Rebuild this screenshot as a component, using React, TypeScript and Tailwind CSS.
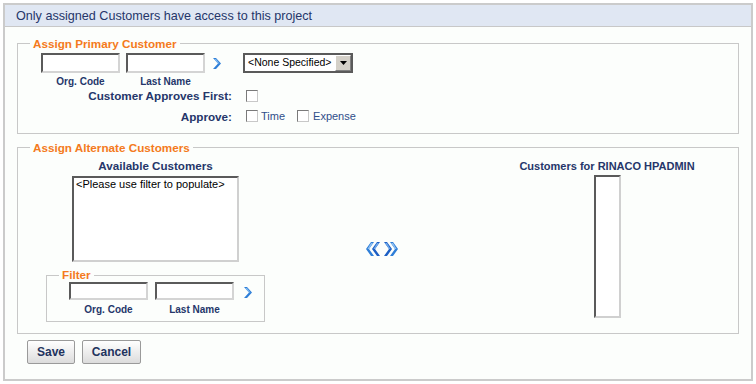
import React from "react";

const font = { fontFamily: '"Liberation Sans", Arial, sans-serif' };

function Chevron({ className = "" }: { className?: string }) {
  return (
    <svg width="8" height="11" viewBox="0 0 8 11" className={className}>
      <polygon points="0,0 3,0 8,5.5 3,11 0,11 5,5.5" fill="#2f7fd8" />
      <polygon points="1,1 3,1 6.5,5.5 5,5.5" fill="#7fb8f0" />
    </svg>
  );
}

function DoubleChevron({ left = false }: { left?: boolean }) {
  return (
    <svg width="15" height="14" viewBox="0 0 15 14" style={left ? { transform: "scaleX(-1)" } : undefined}>
      <polygon points="0,0 3,0 8,7 3,14 0,14 5,7" fill="#1d5fc4" />
      <polygon points="6,0 9,0 14,7 9,14 6,14 11,7" fill="#2f7fd8" />
      <polygon points="1,1 3,1 6.5,7 5,7" fill="#6ea8ea" />
      <polygon points="7,1 9,1 12.5,7 11,7" fill="#8fc0f2" />
    </svg>
  );
}

function TextBox({ w = "w-[79px]", h = "h-[20px]" }: { w?: string; h?: string }) {
  return (
    <div className={`${w} ${h} bg-white border-2 border-t-[#5a5a5a] border-l-[#5a5a5a] border-b-[#d4d4d4] border-r-[#d4d4d4]`} />
  );
}

function Check() {
  return <div className="w-[12px] h-[12px] bg-white border border-t-[#7a7a7a] border-l-[#7a7a7a] border-b-[#c8c8c8] border-r-[#c8c8c8]" />;
}

function Legend({ children }: { children: React.ReactNode }) {
  return <legend className="ml-[12px] px-[3px] text-[11.7px] font-bold text-[#f47a20] leading-[15px]">{children}</legend>;
}

function Btn({ children, w }: { children: React.ReactNode; w: string }) {
  return (
    <button className={`${w} h-[24px] rounded-[2px] border border-[#9a9a9a] bg-gradient-to-b from-white to-[#dcdcdc] text-[12px] font-bold text-[#22335e]`}>
      {children}
    </button>
  );
}

export default function App() {
  return (
    <div className="bg-white w-[756px] h-[384px] pt-[3px] pl-[3px]" style={font}>
      <div className="w-[750px] h-[378px] border-2 border-[#cbcbcb] bg-[#fcfefc]">
        {/* header */}
        <div className="h-[22px] pt-[1px] bg-[#e0e7f3] border-b border-[#c8c8c8] pl-[11px] flex items-center text-[12.6px] text-[#25366a]">
          Only assigned Customers have access to this project
        </div>

        {/* primary customer */}
        <fieldset className="mx-[12px] mt-[9px] h-[98px] border border-[#c8c8c8]">
          <Legend>Assign Primary Customer</Legend>
          <div className="flex items-start pl-[23px] pt-[2px]">
            <div className="flex flex-col items-center">
              <TextBox />
              <span className="text-[10px] font-bold text-[#25366a] mt-[1px]">Org. Code</span>
            </div>
            <div className="flex flex-col items-center ml-[6px]">
              <TextBox />
              <span className="text-[10px] font-bold text-[#25366a] mt-[1px]">Last Name</span>
            </div>
            <Chevron className="ml-[8px] mt-[5px]" />
            <div className="ml-[22px] w-[110px] h-[20px] border-2 border-[#5a5a5a] bg-white flex items-center">
              <span className="pl-[3px] text-[10.5px] text-black flex-1 whitespace-nowrap">&lt;None Specified&gt;</span>
              <div className="w-[16px] h-full bg-[#d4d0c8] border border-t-white border-l-white border-b-[#808080] border-r-[#808080] flex items-center justify-center">
                <svg width="7" height="4" viewBox="0 0 7 4"><polygon points="0,0 7,0 3.5,4" fill="#000" /></svg>
              </div>
            </div>
          </div>
          <div className="flex items-center mt-[-2px]">
            <span className="w-[214px] text-right text-[11.7px] font-bold text-[#25366a]">Customer Approves First:</span>
            <div className="ml-[14px]"><Check /></div>
          </div>
          <div className="flex items-center mt-[3px]">
            <span className="w-[214px] text-right text-[11.7px] font-bold text-[#25366a]">Approve:</span>
            <div className="ml-[14px] flex items-center">
              <Check />
              <span className="ml-[3px] text-[11px] text-[#2f4e8a]">Time</span>
              <div className="ml-[12px]"><Check /></div>
              <span className="ml-[4px] text-[11px] text-[#2f4e8a]">Expense</span>
            </div>
          </div>
        </fieldset>

        {/* alternate customers */}
        <fieldset className="mx-[12px] mt-[6px] h-[194px] border border-[#c8c8c8]">
          <Legend>Assign Alternate Customers</Legend>
          <div className="flex items-start">
            <div className="ml-[28px] w-[219px] flex flex-col">
              <div className="ml-[26px] w-[167px] text-center text-[11.6px] font-bold text-[#25366a] mt-[4px] leading-[14px]">Available Customers</div>
              <div className="ml-[26px] mt-[3px] w-[167px] h-[86px] bg-white border-2 border-t-[#5a5a5a] border-l-[#5a5a5a] border-b-[#d0d0d0] border-r-[#d0d0d0] px-[2px] text-[11px] text-black leading-[13px]">
                &lt;Please use filter to populate&gt;
              </div>
              <fieldset className="mt-[6px] w-[219px] h-[54px] border border-[#c8c8c8]">
                <legend className="ml-[12px] px-[3px] text-[11.7px] font-bold text-[#f47a20] leading-[14px]">Filter</legend>
                <div className="flex items-start pl-[22px]">
                  <div className="flex flex-col items-center">
                    <TextBox w="w-[79px]" h="h-[18px]" />
                    <span className="text-[10px] font-bold text-[#25366a] mt-[2px]">Org. Code</span>
                  </div>
                  <div className="flex flex-col items-center ml-[7px]">
                    <TextBox w="w-[79px]" h="h-[18px]" />
                    <span className="text-[10px] font-bold text-[#25366a] mt-[2px]">Last Name</span>
                  </div>
                  <Chevron className="ml-[10px] mt-[5px]" />
                </div>
              </fieldset>
            </div>
            <div className="ml-[100px] mt-[87px] flex items-center gap-[4px]">
              <DoubleChevron left />
              <DoubleChevron />
            </div>
            <div className="ml-[108px] w-[200px] flex flex-col items-center">
              <div className="text-[11px] font-bold text-[#25366a] mt-[4px] leading-[14px] whitespace-nowrap">Customers for RINACO HPADMIN</div>
              <div className="mt-[2px] w-[27px] h-[143px] bg-white border-2 border-t-[#5a5a5a] border-l-[#5a5a5a] border-b-[#d0d0d0] border-r-[#d0d0d0]" />
            </div>
          </div>
        </fieldset>

        <div className="flex gap-[7px] ml-[22px] mt-[6px]">
          <Btn w="w-[48px]">Save</Btn>
          <Btn w="w-[59px]">Cancel</Btn>
        </div>
      </div>
    </div>
  );
}
